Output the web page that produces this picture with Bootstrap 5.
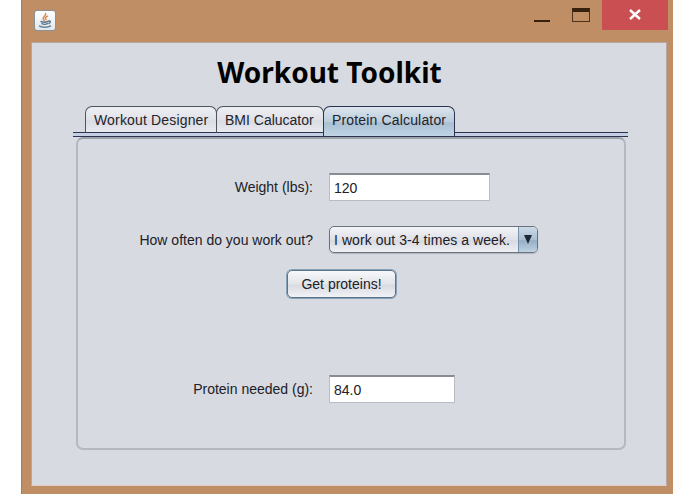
<!DOCTYPE html>
<html lang="en">
<head>
    <meta charset="UTF-8">
    <meta name="viewport" content="width=device-width, initial-scale=1.0">
    <link href="https://cdn.jsdelivr.net/npm/bootstrap@5.3.3/dist/css/bootstrap.min.css" rel="stylesheet">
    <title>Workout Toolkit</title>
    <style>
        body {
            background: #fff;
            font-family: "Liberation Sans", Arial, sans-serif;
            font-size: 14px;
            line-height: 18px;
            color: #202027;
            overflow: hidden;
        }

        .app-window {
            width: 652px;
            height: 494px;
            margin-left: 21px;
            padding: 0 6px 8px 10px;
            background: #c08e65;
            border-left: 1px solid #a87c5c;
        }

        .title-bar {
            height: 42px;
            padding-left: 2px;
        }

        .java-icon {
            width: 22px;
            height: 21px;
            margin-top: 10px;
            border: 1px solid #8c9197;
            border-radius: 3px;
            background: linear-gradient(#fff, #e1e8ee);
        }

        .min-btn {
            width: 16px;
            height: 2px;
            margin: 20px 22px 0 0;
            background: #38200e;
        }

        .max-btn {
            width: 18px;
            height: 14px;
            margin: 8px 12px 0 0;
            border: 1px solid #4e331c;
            border-top: 4px solid #38200e;
        }

        .close-btn {
            width: 66px;
            height: 30px;
            margin-right: -1px;
            padding: 0;
            border: 0;
            background: #c94f52;
        }

        .client-area {
            height: 444px;
            margin-left: -1px;
            background: #d7dae1;
            border: 1px solid #b8a6a0;
            border-bottom-color: #e2cdc4;
            padding: 13px 38px 0 41px;
        }

        .app-title {
            height: 50px;
            margin: 0;
            padding-right: 42px;
            font: bold 28px/32px "Noto Sans", "Open Sans", sans-serif;
            color: #000;
        }

        .tab-strip {
            height: 31px;
            padding-left: 12px;
            background: linear-gradient(#2b3350, #2b3350) 0 26px / 100% 1px no-repeat,
                        linear-gradient(#c5cfe4, #c5cfe4) 0 27px / 100% 3px no-repeat,
                        linear-gradient(#2b3350, #2b3350) 0 30px / 100% 1px no-repeat;
        }

        .tab-strip .nav-link {
            height: 27px;
            padding: 4px 0 0 8px;
            color: #23232b;
            border: 1px solid #50545f;
            border-bottom-color: #2b3350;
            border-radius: 7px 7px 0 0;
            background: linear-gradient(#eeeff3, #e0e2e8 50%, #dadce3 55%, #e8eaf0);
            white-space: nowrap;
        }

        .tab-strip .nav-link + .nav-link {
            margin-left: -1px;
        }

        .tab-strip .nav-link.active {
            height: 30px;
            border-color: #2b3350;
            border-bottom: 0;
            background: linear-gradient(#dce5ed, #bccddc 50%, #a9bfd2 55%, #c0d4e6);
        }

        .tab-designer,
        .tab-protein {
            width: 132px;
            letter-spacing: .16px;
        }

        .tab-bmi { width: 108px; }

        .tab-panel {
            width: 550px;
            height: 313px;
            margin-left: 3px;
            padding-top: 34px;
            border: 2px solid #b5b8c0;
            border-top-color: #9fa2aa;
            border-radius: 7px;
        }

        .field-label {
            width: 235px;
            margin-right: 16px;
            text-align: right;
        }

        .text-box {
            height: 28px;
            padding: 1px 4px 0;
            border: 1px solid #b9bcc2;
            border-top: 2px solid #898c92;
            border-radius: 0;
            background: #fff;
            font-size: 14px;
            line-height: 18px;
            color: #202027;
        }

        .weight-box { width: 161px; }
        .result-box { width: 126px; }

        .freq-row { margin-top: 25px; }
        .result-row { margin-top: 77px; }

        .freq-select {
            width: 209px;
            height: 27px;
            border: 1px solid #6c727d;
            border-radius: 5px;
            background: linear-gradient(#f3f4f7, #dfe1e7 50%, #d7dae1 55%, #eef0f4);
            box-shadow: 0 1px 1px #b0b5be;
            white-space: nowrap;
            overflow: hidden;
        }

        .freq-text { letter-spacing: .06px; }

        .freq-arrow {
            width: 19px;
            border-left: 1px solid #7690a8;
            background: linear-gradient(#cbdae7, #a9bfd2 50%, #95b0c7 55%, #bed1e2);
        }

        .calc-btn {
            width: 109px;
            height: 28px;
            margin: 17px 0 0 209px;
            padding: 0;
            border: 1px solid #5d7388;
            border-radius: 5px;
            box-shadow: 0 0 0 1px #86a2b9;
            background: linear-gradient(#f7f8fa, #e2e4e9 50%, #d9dbe2 55%, #f1f2f6);
            font-size: 14px;
            line-height: 18px;
            color: #202027;
        }
    </style>
</head>
<body>
<div class="app-window">
    <div class="title-bar d-flex align-items-start">
        <div class="java-icon d-flex justify-content-center align-items-center me-auto">
            <svg width="18" height="19" viewBox="0 0 18 19" fill="none" stroke-linecap="round">
                <path d="M9.6 2.5C10.3 5 6.5 5.6 7.2 8.1L8.4 9.6M11.5 5.2C8.9 6.5 9.2 7.5 10 8.7" stroke="#d98b51" stroke-width="1.5"/>
                <path d="M5 10.5Q8.5 12 12 10.5M5.8 12.7Q8.5 14 11.5 12.7M12.5 10Q16 9.8 13 12.5" stroke="#587489" stroke-width="1.4"/>
                <path d="M3.5 15Q8.5 17.5 14.5 15" stroke="#6c8698" stroke-width="1.5"/>
            </svg>
        </div>
        <div class="min-btn"></div>
        <div class="max-btn"></div>
        <button type="button" class="close-btn d-flex justify-content-center align-items-center" aria-label="Close">
            <svg width="12" height="12" viewBox="0 0 12 12" stroke="#fff" stroke-width="2.4"><path d="M1 1L11 10M11 1L1 10"/></svg>
        </button>
    </div>

    <div class="client-area">
        <h1 class="app-title text-center">Workout Toolkit</h1>

        <nav class="tab-strip nav flex-nowrap align-items-start">
            <a class="nav-link tab-designer" href="#">Workout Designer</a>
            <a class="nav-link tab-bmi" href="#">BMI Calucator</a>
            <a class="nav-link tab-protein active" href="#">Protein Calculator</a>
        </nav>

        <div class="tab-panel">
            <div class="d-flex align-items-center">
                <label class="field-label" for="weight">Weight (lbs):</label>
                <input class="text-box weight-box" type="text" id="weight" value="120">
            </div>
            <div class="freq-row d-flex align-items-center">
                <div class="field-label">How often do you work out?</div>
                <div class="freq-select d-flex">
                    <span class="freq-text flex-grow-1 ps-1 pt-1">I work out 3-4 times a week.</span>
                    <span class="freq-arrow d-flex justify-content-center align-items-center">
                        <svg width="8" height="9" viewBox="0 0 8 9"><path d="M0 0H8L4 9Z" fill="#1d2733"/></svg>
                    </span>
                </div>
            </div>
            <button type="button" class="calc-btn d-block">Get proteins!</button>
            <div class="result-row d-flex align-items-center">
                <label class="field-label" for="protein">Protein needed (g):</label>
                <input class="text-box result-box" type="text" id="protein" value="84.0">
            </div>
        </div>
    </div>
</div>

<script src="https://cdn.jsdelivr.net/npm/bootstrap@5.3.3/dist/js/bootstrap.bundle.min.js"></script>
</body>
</html>
